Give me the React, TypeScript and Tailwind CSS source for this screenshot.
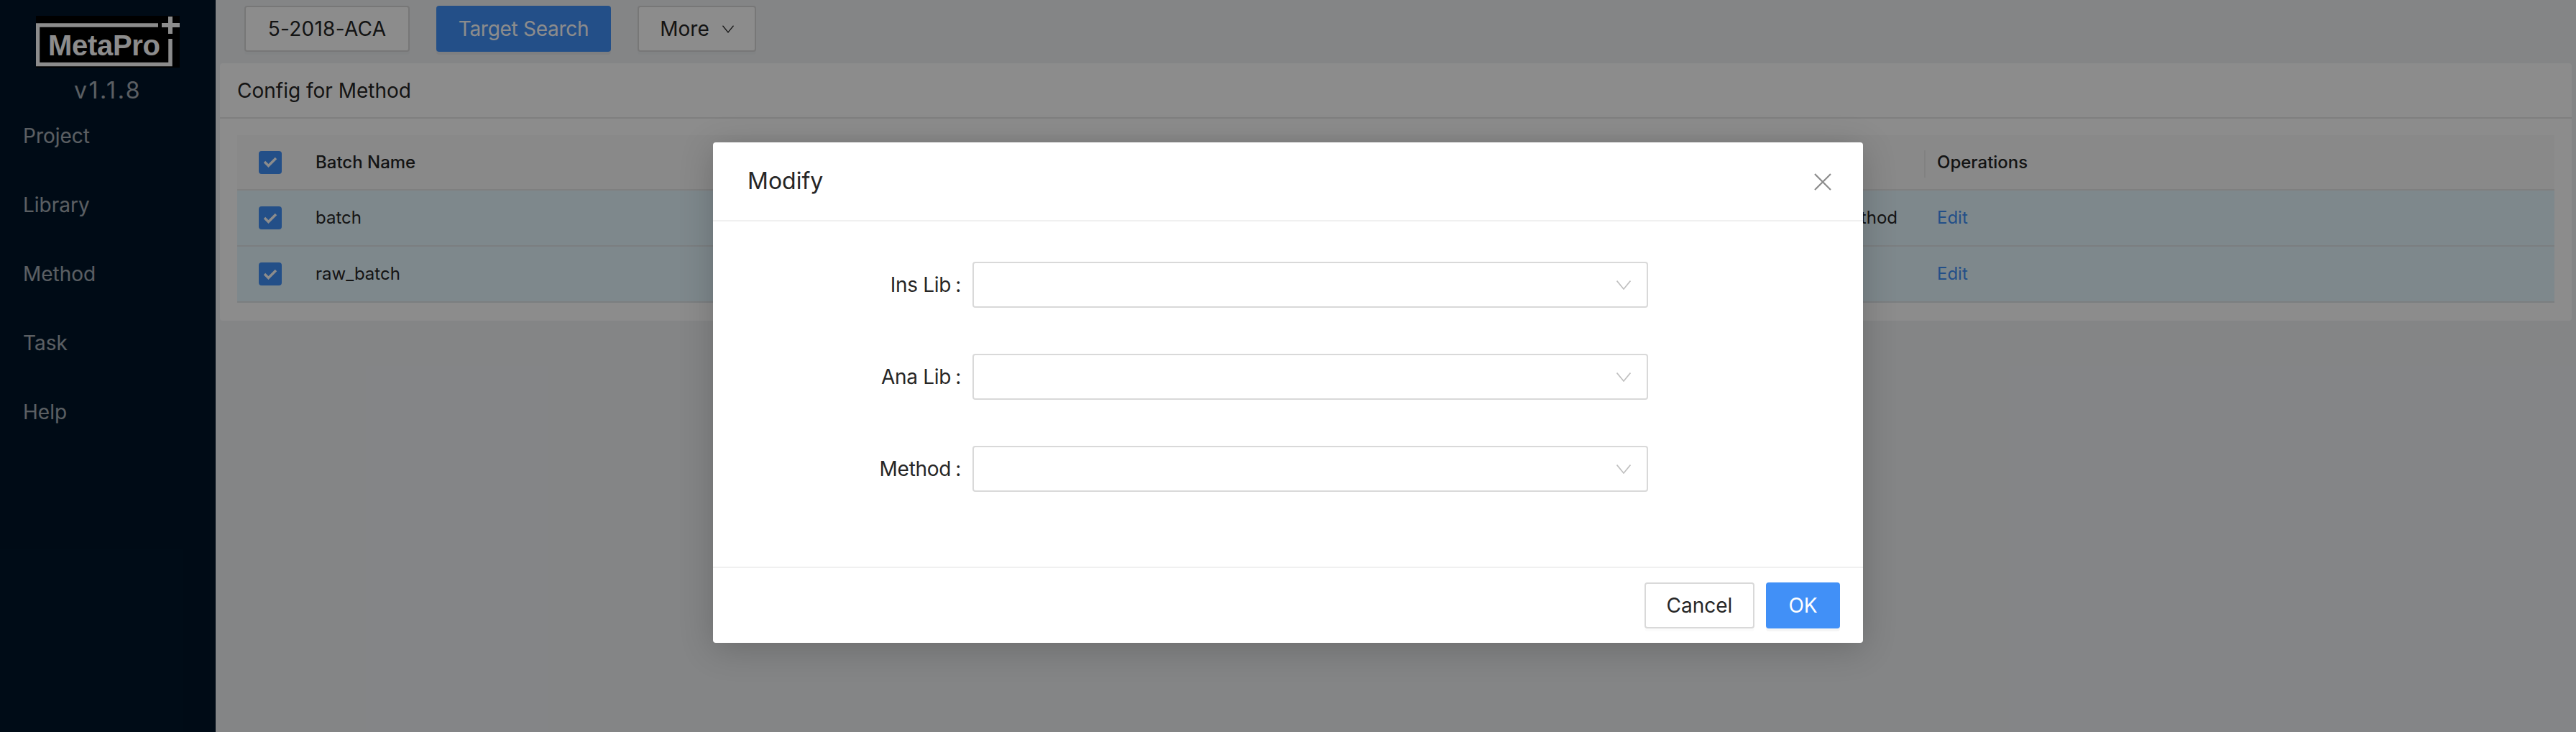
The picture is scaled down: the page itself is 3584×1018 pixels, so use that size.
import React from 'react';

const navItems = ['Project', 'Library', 'Method', 'Task', 'Help'];

const Logo: React.FC = () => (
  <svg width="200" height="72" viewBox="0 0 200 72" className="block">
    <rect width="200" height="72" fill="#000" />
    <path d="M170 13H2.500V67.500H187V32" fill="none" stroke="#fff" strokeWidth="5.500" />
    <path d="M175 13H200M187 1V25" fill="none" stroke="#fff" strokeWidth="6" />
    <text x="17" y="55" fill="#fff" fontSize="40" fontWeight="700" letterSpacing="-0.3" fontFamily="'Liberation Sans', Arial, sans-serif">
      MetaPro
    </text>
  </svg>
);

const Chevron: React.FC<{ className?: string }> = ({ className }) => (
  <svg viewBox="0 0 20 13" fill="none" stroke="currentColor" strokeWidth="1.600" className={className}>
    <path d="M0.600 0.600L10 12L19.400 0.600" />
  </svg>
);

const Checkbox: React.FC = () => (
  <div className="w-8 h-8 rounded-[4px] bg-[#4190f7] flex items-center justify-center">
    <svg width="20" height="15" viewBox="0 0 20 15" fill="none" stroke="#fff" strokeWidth="3.500">
      <path d="M2 7L7.500 12.500L18 2" />
    </svg>
  </div>
);

const Row: React.FC<{ name: string; method?: string }> = ({ name, method }) => (
  <div className="flex items-center h-[78px] bg-[#e6f7ff] border-b-2 border-[#e0e6e9] text-[24px] text-[#262626]">
    <div className="w-[109px] pl-[30px]">
      <Checkbox />
    </div>
    <div className="flex-1">{name}</div>
    <div className="w-[300px] text-right pr-[37px]">{method}</div>
    <div className="w-[877px] pl-[18px] text-[#4190f7]">Edit</div>
  </div>
);

const SelectRow: React.FC<{ label: string }> = ({ label }) => (
  <div className="flex items-center">
    <label className="w-[345px] text-right text-[28px] tracking-[-0.01em] text-[#262626]">{label}<span className="ml-[6px]">:</span></label>
    <div className="ml-4 w-[940px] h-16 border-2 border-[#d9d9d9] rounded-[4px] bg-white flex items-center justify-end pr-[22px]">
      <Chevron className="w-5 h-[13px] text-[#bfbfbf]" />
    </div>
  </div>
);

export default function App() {
  return (
    <div className="relative flex w-full h-[1018px] overflow-hidden bg-[#f0f2f5] font-['Inter','Noto_Sans',sans-serif]">
      <aside className="w-[300px] shrink-0 bg-[#001529] text-white/65">
        <div className="flex justify-center pt-[22px]">
          <Logo />
        </div>
        <div className="text-center text-[32px] leading-[40px] mt-3 tracking-[0.08em]">v1.1.8</div>
        <nav className="mt-[3px] flex flex-col gap-4">
          {navItems.map((item) => (
            <div key={item} className="h-20 pl-8 leading-[80px] text-[28px]">{item}</div>
          ))}
        </nav>
      </aside>

      <main className="flex-1 min-w-0">
        <div className="flex gap-[37px] pl-10 pt-2">
          <button className="h-16 w-[230px] border-2 border-[#d9d9d9] rounded-[4px] bg-white text-[28px] tracking-[0.01em] text-[#262626] shadow-[0_4px_0_rgba(0,0,0,0.015)]">5-2018-ACA</button>
          <button className="h-16 w-[243px] rounded-[4px] bg-[#4190f7] text-[28px] tracking-[-0.01em] text-white shadow-[0_4px_0_rgba(0,0,0,0.04)]">Target Search</button>
          <button className="h-16 w-[165px] border-2 border-[#d9d9d9] rounded-[4px] bg-white text-[28px] text-[#262626] flex items-center justify-center gap-[18px] shadow-[0_4px_0_rgba(0,0,0,0.015)]">
            More
            <Chevron className="w-4 h-[11px] text-[#262626]" />
          </button>
        </div>

        <section className="mx-[6px] mt-4 bg-white rounded-[4px]">
          <div className="h-[77px] flex items-center px-6 border-b-2 border-[#e8e8e8] text-[28px] text-[#262626]">Config for Method</div>
          <div className="px-6 pt-[23px] pb-[25px]">
            <div className="flex items-center h-[77px] bg-[#fafafa] border-b-2 border-[#e8e8e8] text-[24px] font-medium text-[#262626]">
              <div className="w-[109px] pl-[30px]">
                <Checkbox />
              </div>
              <div className="flex-1">Batch Name</div>
              <div className="w-[877px] relative pl-[18px]">
                <span className="absolute left-0 top-[1px] h-[38px] w-[2px] bg-[#ececec]" />
                Operations
              </div>
            </div>
            <Row name="batch" method="Method" />
            <Row name="raw_batch" />
          </div>
        </section>
      </main>

      <div className="absolute inset-0 bg-[rgba(0,0,0,0.45)]" />

      <div className="absolute inset-0 flex justify-center pt-[198px]">
        <div className="w-[1600px] h-[696px] bg-white rounded-[4px] shadow-[0_8px_48px_rgba(0,0,0,0.2)] flex flex-col">
          <div className="h-[110px] shrink-0 flex items-center justify-between pl-12 pr-[44px] border-b-2 border-[#f0f0f0]">
            <span className="text-[32px] text-[#262626]">Modify</span>
            <svg width="24" height="24" viewBox="0 0 24 24" fill="none" stroke="#8c8c8c" strokeWidth="2.200" className="mt-[2px]">
              <path d="M1 1L23 23M23 1L1 23" />
            </svg>
          </div>
          <div className="flex-1 flex flex-col gap-16 pt-14">
            <SelectRow label="Ins Lib" />
            <SelectRow label="Ana Lib" />
            <SelectRow label="Method" />
          </div>
          <div className="h-[106px] shrink-0 border-t-2 border-[#f0f0f0] flex justify-end gap-4 pt-5 pr-8">
            <button className="h-16 w-[153px] border-2 border-[#d9d9d9] rounded-[4px] bg-white text-[28px] text-[#262626] shadow-[0_4px_0_rgba(0,0,0,0.015)]">Cancel</button>
            <button className="h-16 w-[103px] rounded-[4px] bg-[#4190f7] text-[28px] text-white shadow-[0_4px_0_rgba(0,0,0,0.04)]">OK</button>
          </div>
        </div>
      </div>
    </div>
  );
}
